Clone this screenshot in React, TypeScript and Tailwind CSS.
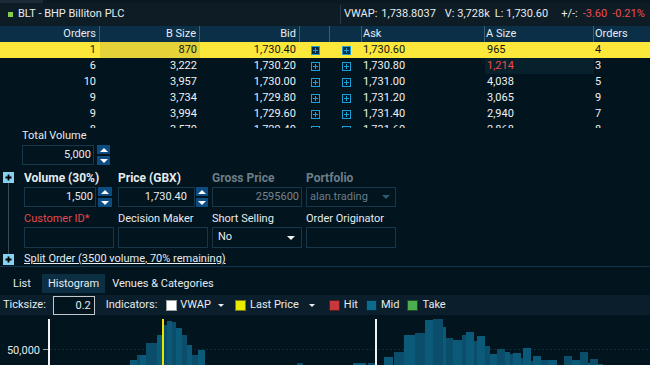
import React from "react";

type Row = { o: string; b: string; bid: string; ask: string; a: string; ao: string; red?: boolean };

const rows: Row[] = [
  { o: "1", b: "870", bid: "1,730.40", ask: "1,730.60", a: "965", ao: "4" },
  { o: "6", b: "3,222", bid: "1,730.20", ask: "1,730.80", a: "1,214", ao: "3", red: true },
  { o: "10", b: "3,957", bid: "1,730.00", ask: "1,731.00", a: "4,038", ao: "5" },
  { o: "9", b: "3,734", bid: "1,729.80", ask: "1,731.20", a: "3,065", ao: "9" },
  { o: "9", b: "3,994", bid: "1,729.60", ask: "1,731.40", a: "2,940", ao: "7" },
  { o: "8", b: "3,570", bid: "1,729.40", ask: "1,731.60", a: "2,868", ao: "8" },
];

const GRID = "grid grid-cols-[100px_100px_100px_30px_32px_123px_109px_56px]";

function PlusIcon({ filled }: { filled?: boolean }) {
  return (
    <svg width="9" height="9" viewBox="0 0 9 9" shapeRendering="crispEdges">
      <rect x="0.5" y="0.5" width="8" height="8" fill={filled ? "#082a44" : "none"} stroke="#1e9fd6" />
      <path d="M4.5 2V7M2 4.5H7" stroke="#1e9fd6" />
    </svg>
  );
}

function BoxPlus({ className }: { className: string }) {
  return (
    <svg className={className} width="11" height="11" viewBox="0 0 11 11">
      <rect x="0" y="0" width="11" height="11" fill="#84d3f1" />
      <path d="M5.5 2.5V8.5M2.5 5.5H8.5" stroke="#000" strokeWidth="1.8" />
    </svg>
  );
}

function Spinner({ className }: { className: string }) {
  return (
    <div className={`flex flex-col gap-[2px] ${className}`}>
      <div className="h-[9px] bg-[#0c4c80] flex items-center justify-center">
        <svg width="8" height="4" viewBox="0 0 8 4">
          <path d="M0 4L4 0L8 4Z" fill="#fff" />
        </svg>
      </div>
      <div className="h-[9px] bg-[#0c4c80] flex items-center justify-center">
        <svg width="8" height="4" viewBox="0 0 8 4">
          <path d="M0 0L4 4L8 0Z" fill="#fff" />
        </svg>
      </div>
    </div>
  );
}

function Caret({ color, className }: { color: string; className?: string }) {
  return (
    <svg className={className} width="8" height="4" viewBox="0 0 8 4">
      <path d="M0 0H8L4 4Z" fill={color} />
    </svg>
  );
}

function SmallCaret({ className }: { className?: string }) {
  return (
    <svg className={className} width="6" height="3" viewBox="0 0 6 3">
      <path d="M0 0H6L3 3Z" fill="#e8eef2" />
    </svg>
  );
}

const bars: [number, number, number][] = [
  [130, 137, 360], [137, 140, 355], [140, 146, 355], [146, 157, 343], [157, 162, 335], [162, 167, 325],
  [167, 172, 321], [172, 176, 322], [176, 182, 328], [182, 187, 335], [187, 192, 345], [192, 198, 355],
  [198, 205, 350], [297, 303, 363],
  [353, 366, 363], [368, 375, 363], [384, 393, 357], [394, 404, 352], [404, 415, 335], [415, 425, 333],
  [425, 433, 320], [433, 443, 319], [443, 446, 327], [446, 453, 338], [453, 462, 340], [462, 466, 335],
  [466, 474, 332], [474, 477, 341], [477, 485, 336], [485, 490, 346], [490, 497, 354], [497, 505, 349],
  [505, 510, 352], [510, 513, 354], [513, 521, 353], [521, 523, 358], [523, 531, 348], [531, 533, 361],
  [533, 541, 356], [541, 548, 360], [548, 557, 360], [564, 572, 356], [572, 580, 360], [580, 588, 352],
  [588, 590, 363], [590, 598, 359], [598, 603, 364],
];

function Chart() {
  return (
    <svg width="650" height="50" viewBox="0 0 650 50">
      <line x1="50" y1="34.5" x2="650" y2="34.5" stroke="#0f2a38" strokeDasharray="2 2" />
      {bars.map(([x0, x1, top], i) => (
        <rect key={i} x={x0} y={top - 315} width={x1 - x0} height={50 - (top - 315)} fill={i % 2 === 0 ? "#0b5a7a" : "#0a4e6b"} />
      ))}
      <rect x="48" y="4" width="2" height="46" fill="#f2f2f2" />
      <rect x="43" y="34" width="5" height="1" fill="#9aa5ab" />
      <rect x="162" y="4" width="2" height="46" fill="#e6e600" />
      <rect x="375" y="4" width="2" height="46" fill="#f2f2f2" />
      <text x="40" y="39" textAnchor="end" fontFamily="Roboto, sans-serif" fontSize="11" fill="#e3e9ec">
        50,000
      </text>
    </svg>
  );
}

export default function App() {
  return (
    <div className="w-[650px] h-[365px] overflow-hidden bg-[#02141e] font-['Roboto',sans-serif] text-[11px] text-[#e6ecef] flex flex-col">
      {/* top strip */}
      <div className="h-[3px] flex shrink-0">
        <div className="w-[43px] bg-[#1b2a36]" />
        <div className="flex-1 bg-[#0a1820]" />
      </div>
      {/* title bar */}
      <div className="h-[23px] shrink-0 bg-[#0e1c26] flex items-center whitespace-nowrap">
        <div className="w-[340px] flex items-center">
          <div className="ml-[8px] w-[5px] h-[5px] bg-[#86cc4a]" />
          <span className="ml-[5px]">BLT - BHP Billiton PLC</span>
        </div>
        <div className="w-[1px] h-[19px] bg-[#2a3945]" />
        <div className="ml-[3px] flex">
          <span>VWAP:</span>
          <span className="ml-[4px]">1,738.8037</span>
          <span className="ml-[9px]">V: 3,728k</span>
          <span className="ml-[5px]">L: 1,730.60</span>
          <span className="ml-[13px]">+/-:</span>
          <span className="ml-[5px] text-[#ee4d4f]">-3.60</span>
          <span className="ml-[5px] text-[#ee4d4f]">-0.21%</span>
        </div>
      </div>
      {/* table header */}
      <div className={`${GRID} h-[16px] shrink-0 bg-[#0b2f47] leading-[16px]`}>
        <div className="text-right pr-[3px] border-r border-[#3f5d70]">Orders</div>
        <div className="text-right pr-[3px] border-r border-[#3f5d70]">B Size</div>
        <div className="text-right pr-[3px] border-r border-[#3f5d70]">Bid</div>
        <div className="border-r border-[#3f5d70]" />
        <div className="border-r border-[#3f5d70]" />
        <div className="pl-[1px] border-r border-[#3f5d70]">Ask</div>
        <div className="pl-[1px] border-r border-[#3f5d70]">A Size</div>
        <div className="pl-[1px]">Orders</div>
      </div>
      {/* rows */}
      <div className="h-[86px] shrink-0 overflow-hidden">
        {rows.map((r, i) => {
          const y = i === 0;
          return (
            <div key={i} className={`${GRID} h-[16px] leading-[16px] ${y ? "bg-[#fce83a] text-[#141414]" : "text-[#eef2f4]"}`}>
              <div className="text-right pr-[4px]">{r.o}</div>
              <div className={`text-right pr-[3px] ${y ? "bg-[#e4d238]" : ""}`}>{r.b}</div>
              <div className="text-right pr-[4px]">{r.bid}</div>
              <div className="flex items-center justify-center">
                <PlusIcon filled={y} />
              </div>
              <div className="flex items-center justify-center">
                <PlusIcon filled={y} />
              </div>
              <div className="pl-[1px]">{r.ask}</div>
              <div className={`pl-[2px] ${r.red ? "text-[#ec4b4b] bg-[#06202c]" : ""}`}>{r.a}</div>
              <div className="pl-[1px]">{r.ao}</div>
            </div>
          );
        })}
      </div>
      {/* form */}
      <div className="flex flex-col shrink-0">
        <div className="pl-[22px] pt-[1px]">
          <div className="h-[13px] leading-[13px]">Total Volume</div>
          <div className="flex mt-[3px]">
            <div className="w-[72px] h-[20px] border border-[#17384a] text-right pr-[2px] leading-[18px]">5,000</div>
            <Spinner className="ml-[3px] w-[13px]" />
          </div>
        </div>
        <div className="flex mt-[6px]">
          <div className="w-[24px] flex flex-col pl-[3px]">
            <BoxPlus className="mt-[1px] shrink-0" />
            <div className="flex-1 w-[1px] ml-[5px] bg-[#3b4954]" />
            <BoxPlus className="shrink-0" />
          </div>
          <div className="flex flex-col">
            <div className="grid grid-cols-[90px_90px_90px_90px] gap-x-[4px]">
              <div className="h-[14px] leading-[14px] text-[12px] font-bold">Volume (30%)</div>
              <div className="h-[14px] leading-[14px] text-[12px] font-bold">Price (GBX)</div>
              <div className="h-[14px] leading-[14px] text-[12px] font-bold text-[#6d7e88]">Gross Price</div>
              <div className="h-[14px] leading-[14px] text-[12px] font-bold text-[#6d7e88]">Portfolio</div>

              <div className="flex mt-[2px]">
                <div className="w-[72px] h-[20px] border border-[#17384a] text-right pr-[2px] leading-[18px]">1,500</div>
                <Spinner className="ml-[2px] w-[14px]" />
              </div>
              <div className="flex mt-[2px]">
                <div className="w-[77px] h-[20px] border border-[#17384a] text-right pr-[7px] leading-[18px]">1,730.40</div>
                <Spinner className="ml-[1px] w-[12px]" />
              </div>
              <div className="mt-[2px] w-[90px] h-[20px] border border-[#17384a] text-right pr-[2px] leading-[18px] text-[#76858e]">2595600</div>
              <div className="mt-[2px] w-[90px] h-[20px] border border-[#17384a] flex items-center justify-between pl-[3px] pr-[5px] text-[#6e7c85]">
                <span>alan.trading</span>
                <Caret color="#2b5a73" />
              </div>

              <div className="mt-[5px] h-[13px] leading-[13px] text-[#e5484d]">Customer ID*</div>
              <div className="mt-[5px] h-[13px] leading-[13px]">Decision Maker</div>
              <div className="mt-[5px] h-[13px] leading-[13px]">Short Selling</div>
              <div className="mt-[5px] h-[13px] leading-[13px]">Order Originator</div>

              <div className="mt-[2px] w-[90px] h-[21px] border border-[#17384a]" />
              <div className="mt-[2px] w-[90px] h-[21px] border border-[#17384a]" />
              <div className="mt-[2px] w-[90px] h-[21px] border border-[#17384a] flex items-center justify-between pl-[5px] pr-[6px]">
                <span>No</span>
                <Caret color="#f2f2f2" />
              </div>
              <div className="mt-[2px] w-[90px] h-[21px] border border-[#17384a]" />
            </div>
            <div className="mt-[4px] h-[13px] leading-[13px] underline whitespace-nowrap">
              Split Order (3500 volume, 70% remaining)
            </div>
          </div>
        </div>
        <div className="h-[1px] mt-[1px] bg-[#12344a]" />
      </div>
      {/* tabs */}
      <div className="shrink-0 flex pt-[7px] pb-[2px] whitespace-nowrap">
        <div className="ml-[7px] px-[6px] h-[19px] leading-[19px]">List</div>
        <div className="ml-[5px] px-[6px] h-[19px] leading-[19px] bg-[#0c2f43]">Histogram</div>
        <div className="ml-[1px] px-[6px] h-[19px] leading-[19px]">Venues &amp; Categories</div>
      </div>
      {/* toolbar */}
      <div className="h-[20px] shrink-0 bg-[#0a1f2b] flex items-center whitespace-nowrap">
        <span className="ml-[3px]">Ticksize:</span>
        <div className="ml-[7px] w-[42px] h-[19px] border border-[#c3c9cc] text-right pr-[3px] leading-[17px] bg-[#02141e]">0.2</div>
        <span className="ml-[11px]">Indicators:</span>
        <div className="ml-[9px] w-[11px] h-[11px] bg-[#ffffff] border border-[#9aa0a4]" />
        <span className="ml-[3px]">VWAP</span>
        <SmallCaret className="ml-[7px]" />
        <div className="ml-[11px] w-[11px] h-[11px] bg-[#eaea00] border border-[#7a7a10]" />
        <span className="ml-[4px]">Last Price</span>
        <SmallCaret className="ml-[10px]" />
        <div className="ml-[14px] w-[11px] h-[11px] bg-[#c8393d] border border-[#5a1a1c]" />
        <span className="ml-[4px]">Hit</span>
        <div className="ml-[8px] w-[11px] h-[11px] bg-[#0d6a8c] border border-[#05283a]" />
        <span className="ml-[4px]">Mid</span>
        <div className="ml-[8px] w-[11px] h-[11px] bg-[#4cae4f] border border-[#1f4f21]" />
        <span className="ml-[4px]">Take</span>
      </div>
      {/* chart */}
      <div className="h-[50px] shrink-0">
        <Chart />
      </div>
    </div>
  );
}
